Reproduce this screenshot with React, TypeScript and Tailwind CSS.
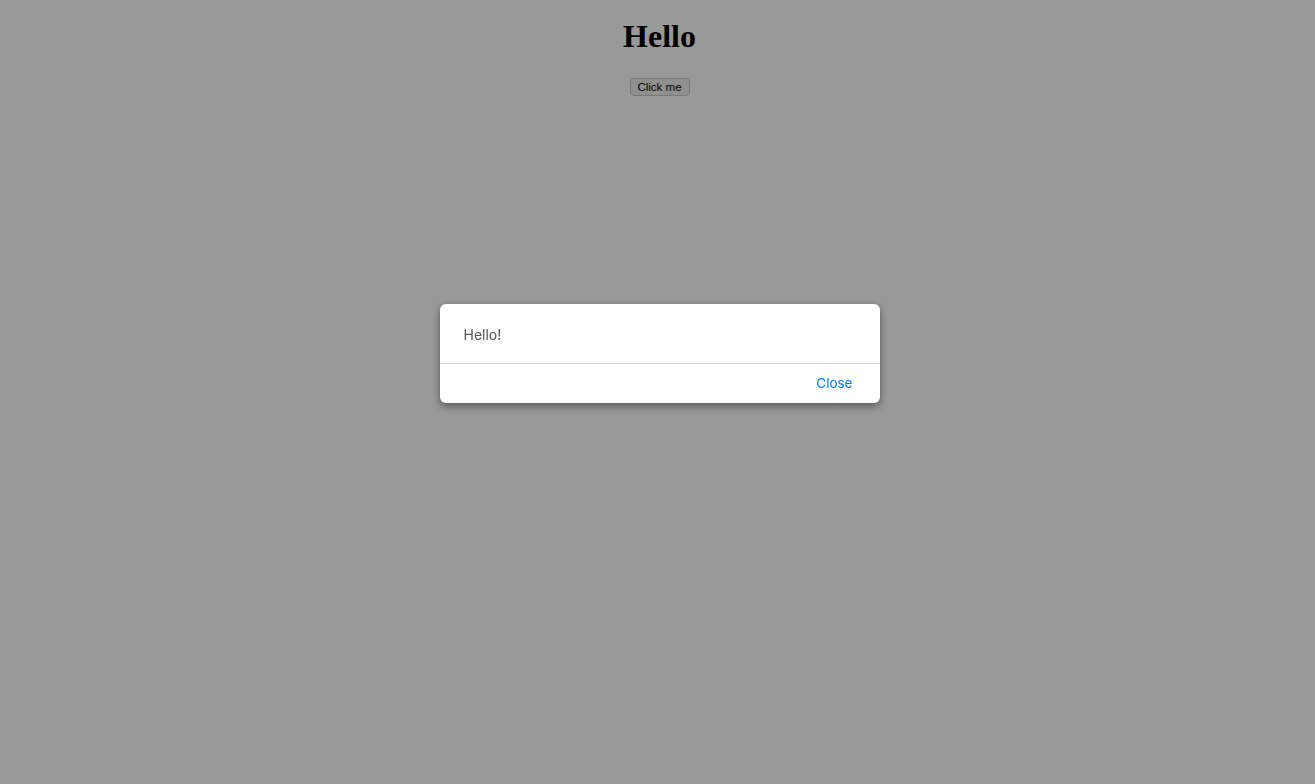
export default function App() {
  return (
    <div className="min-h-screen bg-white text-black">
      <div className="flex flex-col items-center pl-1">
        <h1 className="mt-[18px] mb-[23px] text-[32px] leading-[37px] font-bold font-['Liberation_Serif',serif]">
          Hello
        </h1>
        <button className="h-[18px] w-[60px] rounded-[4px] border border-[#c8c8c8] bg-[#f0f0f0] text-[11.5px] leading-[16px] font-['Liberation_Sans',sans-serif]">
          Click me
        </button>
      </div>

      {/* modal overlay */}
      <div className="fixed inset-0 bg-black/40 flex justify-center items-start pt-[304px] pl-1">
        <div className="w-[440px] bg-white rounded-[6px] shadow-[0_3px_8px_rgba(0,0,0,0.45)] font-['Inter',sans-serif]">
          <div className="h-[59px] px-6 pt-[2px] flex items-center text-sm text-[#555]">Hello!</div>
          <div className="h-[40px] border-t border-[#d6d6d6] flex items-center justify-end pr-[27px] pb-[1px]">
            <button className="text-[13.5px] text-[#007aff]">Close</button>
          </div>
        </div>
      </div>
    </div>
  )
}
